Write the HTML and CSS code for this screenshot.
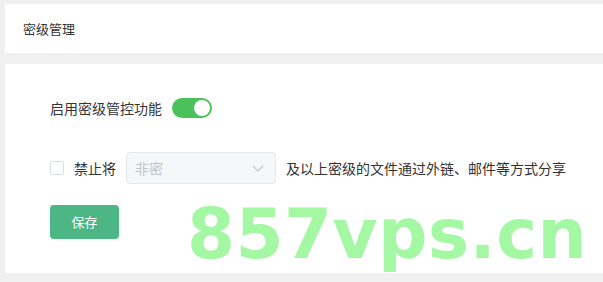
FILE: index.html
```html
<!DOCTYPE html>
<html>
	<head>
		<meta charset="utf-8">
		<title>密级管理</title>
		<link rel="stylesheet" href="styles.css">
	</head>
	<body>
		<div class="page">
			<!--标题栏-->
			<div class="head-card">密级管理</div>
			<!--设置区-->
			<div class="main-card">
				<div class="row">
					<span class="label">启用密级管控功能</span>
					<span class="switch on"><i class="knob"></i></span>
				</div>
				<div class="row row-limit">
					<span class="check"></span>
					<span class="label">禁止将</span>
					<div class="select">
						<span class="placeholder">非密</span>
						<svg class="arrow" width="12" height="7" viewBox="0 0 12 7">
							<path d="M1 1 L6 6 L11 1" fill="none" stroke="#c0c4cc" stroke-width="1.2"/>
						</svg>
					</div>
					<span class="label">及以上密级的文件通过外链、邮件等方式分享</span>
				</div>
				<div class="row row-btn">
					<a class="btn-save" href="javascript:;">保存</a>
				</div>
			</div>
			<div class="watermark">857vps.cn</div>
		</div>
	</body>
</html>
```
FILE: styles.css
```css
*{
	margin: 0px;
	padding: 0px;
	box-sizing: border-box;
}
body{
	background-color: #f0f0f0;
	font-family: "Noto Sans CJK SC", "Liberation Sans", sans-serif;
	color: #333;
}
.page{
	position: relative;
	width: 603px;
	height: 282px;
	padding: 4px 0 0 5px;
	overflow: hidden;
}
.head-card{
	background-color: #fff;
	height: 49px;
	padding-left: 18px;
	font-size: 13px;
	line-height: 49px;
	color: #333;
}
.main-card{
	background-color: #fff;
	margin-top: 11px;
	height: 209px;
	padding: 34px 0 0 45px;
}
.row{
	display: flex;
	align-items: center;
	height: 20px;
}
.label{
	font-size: 14px;
	color: #333;
}
.switch{
	display: flex;
	align-items: center;
	width: 40px;
	height: 20px;
	border-radius: 10px;
	background-color: #dcdfe6;
	margin-left: 10px;
	padding: 2px;
}
.switch.on{
	background-color: #4bc15a;
	justify-content: flex-end;
}
.knob{
	width: 16px;
	height: 16px;
	border-radius: 50%;
	background-color: #fff;
}
.row-limit{
	height: 32px;
	margin-top: 34px;
}
.check{
	width: 14px;
	height: 14px;
	border: 1px solid #dcdfe6;
	border-radius: 2px;
	margin-right: 10px;
}
.select{
	display: flex;
	align-items: center;
	justify-content: space-between;
	width: 150px;
	height: 32px;
	margin: 0 10px 0 10px;
	padding: 0 11px 0 8px;
	background-color: #f5f7fa;
	border: 1px solid #e4e7ed;
	border-radius: 4px;
}
.placeholder{
	font-size: 14px;
	color: #c0c4cc;
}
.row-btn{
	height: 34px;
	margin-top: 21px;
}
.btn-save{
	display: block;
	width: 69px;
	height: 34px;
	line-height: 34px;
	text-align: center;
	border-radius: 4px;
	background-color: #4cb685;
	color: #fff;
	font-size: 13px;
	text-decoration: none;
}
.watermark{
	position: absolute;
	left: 187px;
	top: 189px;
	font-family: "DejaVu Sans", sans-serif;
	font-weight: bold;
	font-size: 69px;
	line-height: 90px;
	color: #a4f8a4;
	letter-spacing: 0.5px;
	white-space: nowrap;
}
```
